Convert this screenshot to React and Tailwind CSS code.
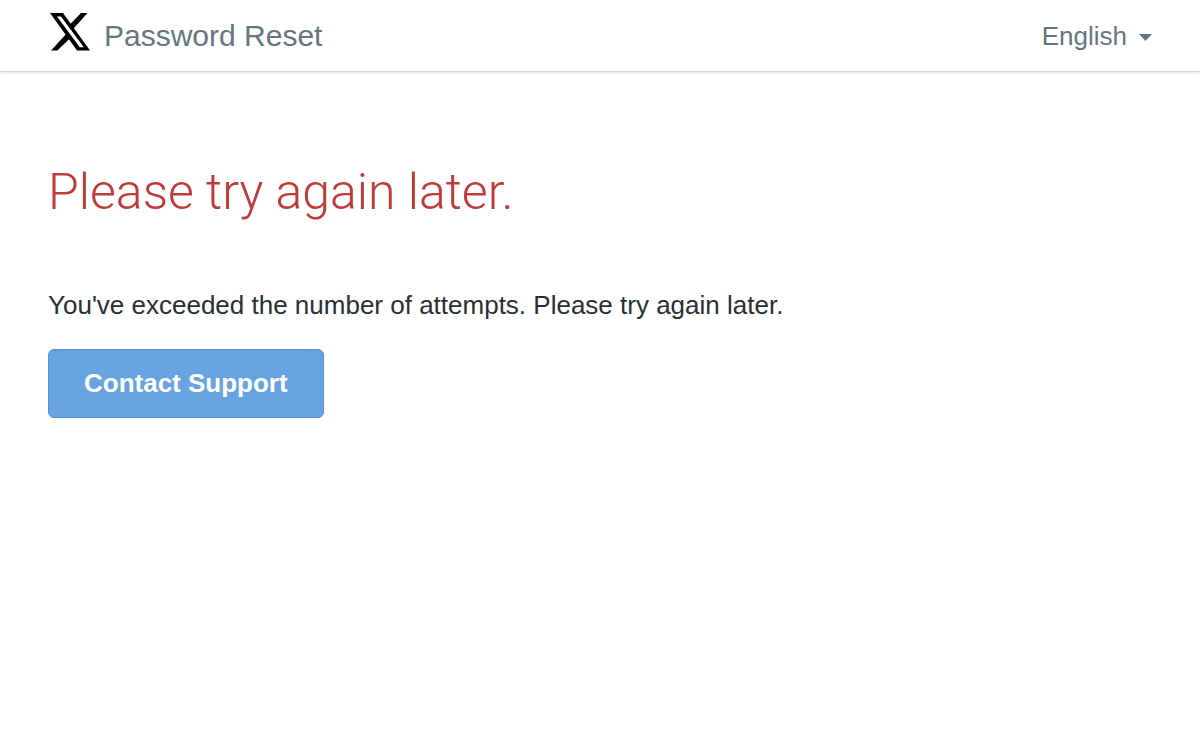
import { useState } from 'react';

const languages = [
    { code: 'en', name: 'English' },
    { code: 'es', name: 'Español' },
    { code: 'fr', name: 'Français' },
    { code: 'de', name: 'Deutsch' },
];

function XLogo() {
    return (
        <svg viewBox="0 0 40 38" className="w-10 h-[38px]" fill="none" aria-hidden="true">
            <path d="M37.500 0L22 17.200L18.200 13.200L31 0zM1 37.500L17.300 19.800L21 24.200L7.400 37.500z" fill="#000" />
            <path fillRule="evenodd" d="M0 0H13L40 37.500H27zM7 3.500L29.800 34.200H33.800L11 3.500z" fill="#000" />
        </svg>
    );
}

export default function App() {
    const [language, setLanguage] = useState('en');

    return (
        <div className="min-h-screen bg-white text-[#292f33] font-['Liberation_Sans',Arial,sans-serif]">
            <header className="flex items-center justify-between h-[72px] px-12 border-b border-[#d9d9d9] shadow-[0_1px_3px_rgba(0,0,0,0.12)]">
                <a href="#" aria-label="Password Reset" className="flex items-center gap-3.5 pl-0.5 text-[30px] leading-10 text-[#66757f]">
                    <span className="-mt-2">
                        <XLogo />
                    </span>
                    Password Reset
                </a>
                <div className="flex items-center gap-3 text-[#66757f]">
                    <select
                        aria-label="Language"
                        value={language}
                        onChange={(e) => setLanguage(e.target.value)}
                        className="appearance-none field-sizing-content bg-transparent text-[26px] leading-8 cursor-pointer outline-none"
                    >
                        {languages.map((lang) => (
                            <option key={lang.code} value={lang.code}>{lang.name}</option>
                        ))}
                    </select>
                    <svg viewBox="0 0 13 7" className="w-[13px] h-[7px] mt-1 pointer-events-none" fill="currentColor" aria-hidden="true">
                        <path d="M0 0h13L6.500 7z" />
                    </svg>
                </div>
            </header>

            <main className="px-12 pt-[88px]">
                <h1 className="text-[50px] leading-16 font-light text-[#be3b3b] font-['Roboto',sans-serif]">
                    Please try again later.
                </h1>
                <p className="mt-[63px] text-[26px] leading-9">
                    You've exceeded the number of attempts. Please try again later.
                </p>
                <button
                    type="button"
                    className="mt-[26px] px-[35px] py-4 rounded-md border border-[#5593d0] bg-[#66a3e0] text-[26px] leading-[35px] font-bold text-white cursor-pointer"
                >
                    Contact Support
                </button>
            </main>
        </div>
    );
}
